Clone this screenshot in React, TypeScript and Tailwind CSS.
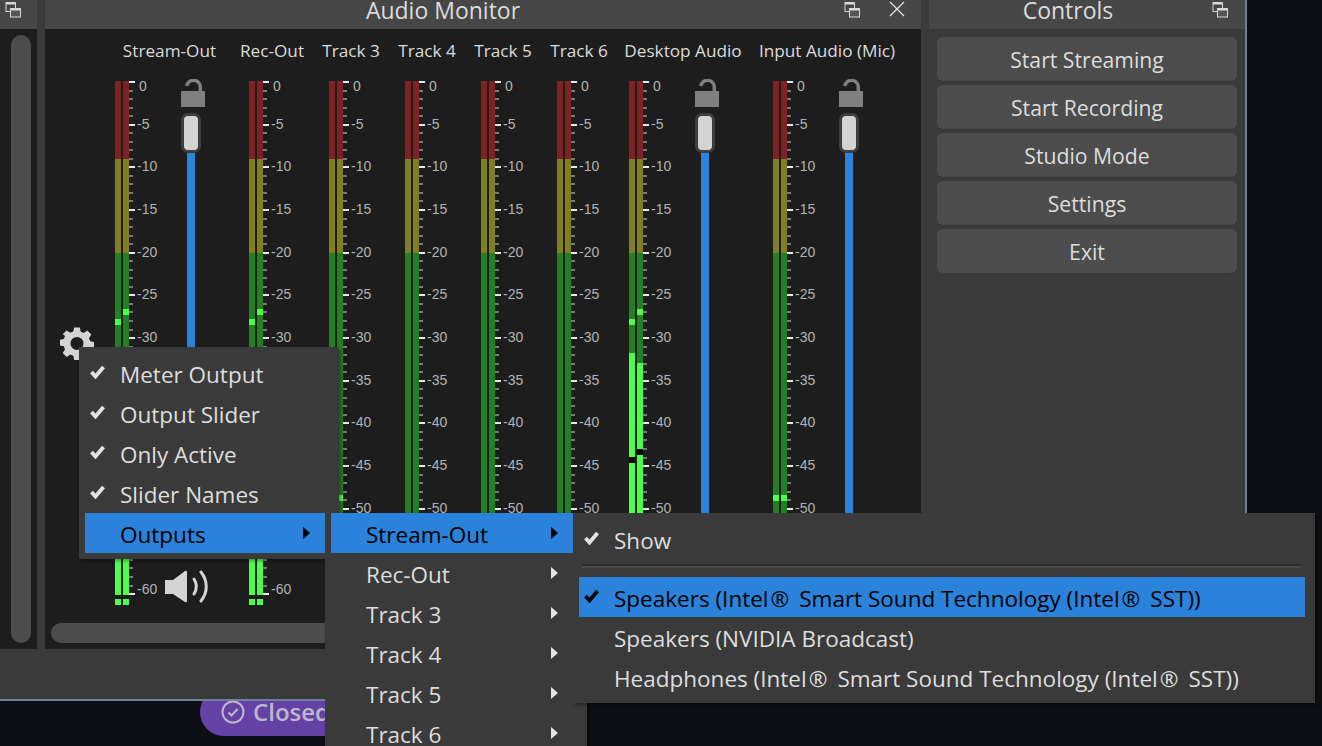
import { ReactNode } from 'react'

const sans = 'font-["Open_Sans","Noto_Sans",sans-serif]'

interface Band {
  top: number
  height: number
  color: string
}

interface StripProps {
  name: string
  left: string
  width: string
  slider?: boolean
  a: Band[]
  b: Band[]
}

const PEAK = 'bg-[#4cff4c]'
const HOLD = 'bg-black'

const outA = [{ top: 238, height: 6, color: PEAK }, { top: 470, height: 44, color: PEAK }, { top: 518, height: 6, color: PEAK }]
const outB = [{ top: 228, height: 6, color: PEAK }, { top: 470, height: 44, color: PEAK }, { top: 518, height: 6, color: PEAK }]

const strips: StripProps[] = [
  { name: 'Stream-Out', left: 'ml-[70px]', width: 'w-[109px]', slider: true, a: outA, b: outB },
  { name: 'Rec-Out', left: 'ml-[25px]', width: 'w-[46px]', a: outA, b: outB },
  { name: 'Track 3', left: 'ml-[34px]', width: 'w-[44px]', a: [], b: [{ top: 414, height: 6, color: PEAK }] },
  { name: 'Track 4', left: 'ml-[32px]', width: 'w-[44px]', a: [], b: [] },
  { name: 'Track 5', left: 'ml-[32px]', width: 'w-[44px]', a: [], b: [] },
  { name: 'Track 6', left: 'ml-[32px]', width: 'w-[44px]', a: [], b: [] },
  {
    name: 'Desktop Audio',
    left: 'ml-[28px]',
    width: 'w-[108px]',
    slider: true,
    a: [{ top: 238, height: 6, color: PEAK }, { top: 272, height: 252, color: PEAK }, { top: 376, height: 6, color: HOLD }],
    b: [{ top: 228, height: 6, color: PEAK }, { top: 282, height: 242, color: PEAK }, { top: 368, height: 6, color: HOLD }],
  },
  {
    name: 'Input Audio (Mic)',
    left: 'ml-[36px]',
    width: 'w-[108px]',
    slider: true,
    a: [{ top: 414, height: 6, color: PEAK }],
    b: [{ top: 414, height: 6, color: PEAK }],
  },
]

function PopoutIcon() {
  return (
    <svg width="17" height="17" viewBox="0 0 17 17" className="shrink-0">
      <rect x="1" y="1.5" width="9.5" height="9" fill="#464646" stroke="#d8d8d8" strokeWidth="1" />
      <rect x="1" y="1.5" width="9.5" height="2" fill="#d8d8d8" />
      <rect x="5.5" y="7.5" width="10" height="8.5" fill="#555" stroke="#d8d8d8" strokeWidth="1" />
      <rect x="5.5" y="7.5" width="10" height="2" fill="#d8d8d8" />
    </svg>
  )
}

function DockHeader({ title, titleClass, iconClass, close }: { title: string; titleClass: string; iconClass: string; close?: boolean }) {
  return (
    <div className="relative h-[29px] shrink-0 overflow-hidden bg-[#464646]">
      <p className={`mt-[-8px] text-center text-[23px] leading-[37px] text-[#dcdcdc] ${titleClass}`}>{title}</p>
      <div className={`absolute top-[1px] ${iconClass}`}>
        <PopoutIcon />
      </div>
      {close && (
        <svg width="16" height="16" viewBox="0 0 16 16" className="absolute right-[16px] top-[1px]">
          <path d="M1 1l14 14M15 1L1 15" stroke="#e6e6e6" strokeWidth="1.2" />
        </svg>
      )}
    </div>
  )
}

function Bar({ bands }: { bands: Band[] }) {
  return (
    <div className="relative flex h-[524px] w-[6px] flex-col">
      <div className="h-[78px] bg-[#7f2222]" />
      <div className="h-[94px] bg-[#7f7f22]" />
      <div className="flex-1 bg-[#227f22]" />
      {bands.map((band, i) => (
        <div
          key={i}
          className={`absolute left-0 w-[6px] ${band.color}`}
          style={{ top: band.top, height: band.height }}
        />
      ))}
      <div className="absolute left-0 top-[514px] h-[4px] w-[6px] bg-[#1d1d1d]" />
    </div>
  )
}

const scaleLabels = [0, -5, -10, -15, -20, -25, -30, -35, -40, -45, -50, -55, -60]

function Scale() {
  const marks = []
  for (let i = 0; i <= 60; i++) {
    const major = i % 5 === 0
    marks.push(
      <rect key={i} x="0" y={Math.round(i * 8.535)} width={major ? 6 : 4} height="2" fill={major ? '#e8e8e8' : '#7a7a7a'} />,
    )
  }
  return (
    <div className="flex h-[524px] w-[36px]">
      <svg width="6" height="524" className="shrink-0">
        {marks}
      </svg>
      <div className="ml-[2px] flex flex-col font-['Liberation_Sans',sans-serif] text-[14px] leading-[14px] text-[#b4b4b4]">
        {scaleLabels.map((db) => (
          <div key={db} className="h-[42.67px] shrink-0 whitespace-nowrap">
            <span
              className={`block ${
                db === 0 ? 'translate-x-[2px] -translate-y-[2px]' : db === -60 ? '-translate-y-[11px]' : '-translate-y-[7px]'
              }`}
            >
              {db === 0 ? '0' : `-${-db}`}
            </span>
          </div>
        ))}
      </div>
    </div>
  )
}

function Slider() {
  return (
    <div className="ml-[16px] flex h-[526px] w-[28px] flex-col">
      <svg width="24" height="28" viewBox="0 0 24 28" className="mt-[-2px] shrink-0">
        <path d="M5.8 7A6.8 6.8 0 0 1 19.3 8.5V12" fill="none" stroke="#808080" strokeWidth="3.4" />
        <rect x="0" y="12" width="24" height="16" fill="#808080" />
      </svg>
      <div className="mt-[6px] h-[40px] w-[20px] rounded-[7px] border-[3px] border-[#3e3e3e] bg-[#d4d4d4]" />
      <div className="ml-[6px] h-[400px] w-[8px] bg-[#2a82da]" />
      <svg width="44" height="34" viewBox="0 0 44 34" className="ml-[-16px] mt-[17px] shrink-0">
        <path d="M0 10h8L20 1Q22 0 22 2V31Q22 33 20 32L8 24H0z" fill="#d4d4d4" />
        <path d="M29 9c3 4.5 3 10 0 15" fill="none" stroke="#d4d4d4" strokeWidth="3" strokeLinecap="round" />
        <path d="M36 2c7 9 7 20 0 29" fill="none" stroke="#d4d4d4" strokeWidth="3" strokeLinecap="round" />
      </svg>
    </div>
  )
}

function Strip({ name, left, width, slider, a, b }: StripProps) {
  return (
    <div className={`shrink-0 ${left} ${width}`}>
      <div className="flex h-[52px] justify-center">
        <span className="whitespace-nowrap pt-[9px] text-[17.2px] leading-[26px] text-[#dcdcdc]">{name}</span>
      </div>
      <div className="flex">
        <div className="flex gap-[2px]">
          <Bar bands={a} />
          <Bar bands={b} />
        </div>
        <Scale />
        {slider && <Slider />}
      </div>
    </div>
  )
}

function Check({ dark }: { dark?: boolean }) {
  return (
    <svg width="15" height="14" viewBox="0 0 15 14" className="block">
      <path d="M1.5 7l4 4.5L13.5 2" fill="none" stroke={dark ? '#0a0a0a' : '#e4e4e4'} strokeWidth="3.8" />
    </svg>
  )
}

function MenuItem({
  label,
  checked,
  active,
  arrow,
  width,
}: {
  label: ReactNode
  checked?: boolean
  active?: boolean
  arrow?: boolean
  width: string
}) {
  return (
    <div className={`relative flex h-[40px] shrink-0 items-center ${width} ${active ? 'bg-[#2a82da] text-black' : 'text-[#dedede]'}`}>
      {checked && (
        <span className="absolute left-[5px] top-[12px]">
          <Check dark={active} />
        </span>
      )}
      <span className="whitespace-nowrap pl-[35px] pt-[4px] text-[22.5px] leading-[30px]">{label}</span>
      {arrow && (
        <span className={`absolute right-[15px] top-[14px] h-0 w-0 border-y-[6px] border-l-[7px] border-y-transparent ${active ? 'border-l-black' : 'border-l-[#e4e4e4]'}`} />
      )}
    </div>
  )
}

const reg = <span className="pl-[2px] pr-[10px]">®</span>

export default function App() {
  return (
    <div className={`relative flex h-[746px] w-[1322px] flex-col overflow-hidden bg-[#0e0f14] ${sans}`}>
      <div className="relative z-10 flex h-[701px] w-[1247px] shrink-0 gap-[8px] border-r-2 border-b-2 border-[#6f7f9c] bg-[#3a3a3a]">
        {/* left dock, cut off by the screen edge */}
        <div className="flex h-[649px] w-[37px] shrink-0 flex-col bg-[#1d1d1d]">
          <div className="relative h-[29px] shrink-0 bg-[#464646]">
            <div className="absolute left-[5px] top-[1px]">
              <PopoutIcon />
            </div>
          </div>
          <div className="ml-[11px] mt-[6px] h-[608px] w-[20px] rounded-full bg-[#4c4c4c]" />
        </div>

        {/* audio monitor */}
        <div className="flex h-[649px] w-[876px] shrink-0 flex-col bg-[#1d1d1d]">
          <DockHeader title="Audio Monitor" titleClass="pr-[80px]" iconClass="right-[60px]" close />
          <div className="relative flex-1 overflow-hidden">
            <div className="flex">
              {strips.map((strip) => (
                <Strip key={strip.name} {...strip} />
              ))}
            </div>
            <svg width="34" height="34" viewBox="0 0 24 24" className="absolute left-[15px] top-[297px]">
              <path
                fill="#d4d4d4"
                fillRule="evenodd"
                d="M10 1h4l.6 3a8 8 0 0 1 2.1.9l2.6-1.7 2.8 2.8-1.7 2.6a8 8 0 0 1 .9 2.1l3 .6v4l-3 .6a8 8 0 0 1-.9 2.1l1.7 2.6-2.8 2.8-2.6-1.7a8 8 0 0 1-2.1.9L14 24h-4l-.6-3a8 8 0 0 1-2.1-.9l-2.6 1.7-2.8-2.8 1.7-2.6a8 8 0 0 1-.9-2.1l-3-.6v-4l3-.6a8 8 0 0 1 .9-2.1L1.9 5.9l2.8-2.8 2.6 1.7a8 8 0 0 1 2.1-.9zM12 7.7a4.6 4.6 0 1 0 0 9.2 4.6 4.6 0 0 0 0-9.2z"
              />
            </svg>
            <div className="absolute bottom-[6px] left-[6px] h-[20px] w-[864px] rounded-full bg-[#4c4c4c]" />
          </div>
        </div>

        {/* controls */}
        <div className="flex w-[316px] shrink-0 flex-col">
          <DockHeader title="Controls" titleClass="pr-[38px]" iconClass="right-[16px]" />
          <div className="flex flex-col gap-[4px] px-[8px] pt-[8px]">
            {['Start Streaming', 'Start Recording', 'Studio Mode', 'Settings', 'Exit'].map((label) => (
              <button key={label} className="h-[44px] rounded-[6px] bg-[#4c4c4c] pt-[2px] text-[21.2px] text-[#dedede]">
                {label}
              </button>
            ))}
          </div>
        </div>
      </div>

      {/* what lies behind the window */}
      <div className="ml-[200px] mt-[-13px] flex h-[48px] w-[200px] shrink-0 items-center gap-[8px] rounded-l-[24px] bg-[#6441a5] pl-[21px] text-[24px] font-semibold text-[#bdb8c9]">
        <svg width="24" height="24" viewBox="0 0 24 24" className="shrink-0">
          <circle cx="12" cy="12" r="10.5" fill="none" stroke="#bdb8c9" strokeWidth="2" />
          <path d="M7.5 12.5l3 3 6-6.5" fill="none" stroke="#bdb8c9" strokeWidth="2" />
        </svg>
        Closed
      </div>

      {/* popup menus */}
      <div className="absolute left-[79px] top-[347px] z-20 flex h-[212px] w-[260px] flex-col items-start bg-[#3a3a3a] pl-[6px] pt-[6px] shadow-[2px_2px_3px_rgba(0,0,0,0.35)]">
        <MenuItem width="w-[240px]" checked label="Meter Output" />
        <MenuItem width="w-[240px]" checked label="Output Slider" />
        <MenuItem width="w-[240px]" checked label="Only Active" />
        <MenuItem width="w-[240px]" checked label="Slider Names" />
        <MenuItem width="w-[240px]" active arrow label="Outputs" />
      </div>

      <div className="absolute left-[325px] top-[513px] z-20 flex h-[233px] w-[262px] flex-col overflow-hidden bg-[#3a3a3a] pl-[6px] shadow-[2px_2px_3px_rgba(0,0,0,0.35)]">
        <MenuItem width="w-[242px]" active arrow label="Stream-Out" />
        <MenuItem width="w-[242px]" arrow label="Rec-Out" />
        <MenuItem width="w-[242px]" arrow label="Track 3" />
        <MenuItem width="w-[242px]" arrow label="Track 4" />
        <MenuItem width="w-[242px]" arrow label="Track 5" />
        <MenuItem width="w-[242px]" arrow label="Track 6" />
      </div>

      <div className="absolute left-[573px] top-[513px] z-20 flex h-[190px] w-[742px] flex-col bg-[#3a3a3a] pl-[6px] pt-[6px] shadow-[2px_2px_3px_rgba(0,0,0,0.35)]">
        <MenuItem width="w-[726px]" checked label="Show" />
        <div className="mb-[9px] ml-[3px] mt-[5px] h-[4px] w-[718px] border-t-2 border-b-2 border-t-[#2c2c2c] border-b-[#4a4a4a]" />
        <MenuItem width="w-[726px]" checked active label={<>Speakers (Intel{reg}Smart Sound Technology (Intel{reg}SST))</>} />
        <MenuItem width="w-[726px]" label="Speakers (NVIDIA Broadcast)" />
        <MenuItem width="w-[726px]" label={<>Headphones (Intel{reg}Smart Sound Technology (Intel{reg}SST))</>} />
      </div>
    </div>
  )
}
